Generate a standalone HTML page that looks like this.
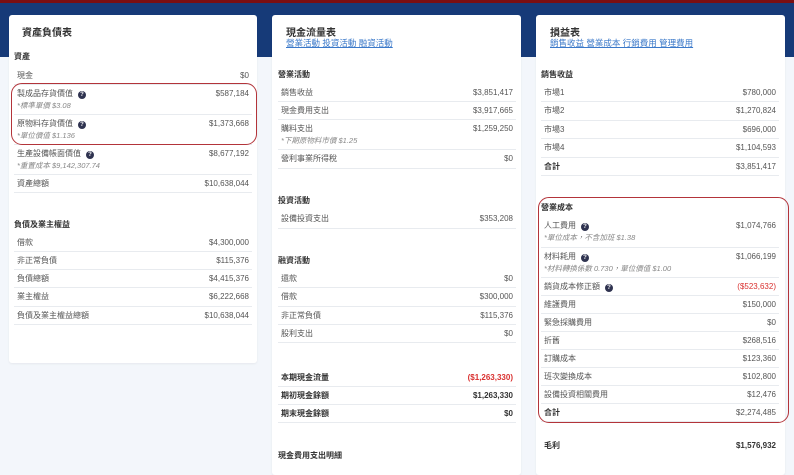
<!DOCTYPE html>
<html><head><meta charset="utf-8">
<style>
*{margin:0;padding:0;box-sizing:border-box}
body{width:794px;height:468px;overflow:hidden;background:#f3f6fb;font-family:"Liberation Sans","Noto Sans CJK TC",sans-serif;font-size:8px;color:#555;position:relative}
.top{position:absolute;left:0;top:0;width:794px;height:3px;background:#7a0e12}
.band{position:absolute;left:0;top:3px;width:794px;height:54px;background:#163a78}
.card{position:absolute;background:#fff;border-radius:3px;box-shadow:0 1px 2px rgba(0,0,0,.06)}
.t{position:absolute;font-size:10px;font-weight:bold;color:#333}
.lk{position:absolute;font-size:8.5px;color:#3a78c9;text-decoration:underline}
.h{position:absolute;font-weight:bold;color:#333;font-size:8px}
.r{position:absolute;border-bottom:1px solid #e8ebef;line-height:18px}
.r .l{position:absolute;left:3px;top:0}
.r .v{position:absolute;right:3px;top:0}
.r .s{position:absolute;left:3px;top:12px;font-style:italic;color:#888;font-size:7.5px}
.b{font-weight:bold;color:#333}
.red{color:#d9302f}
.q{display:inline-block;width:8px;height:8px;border-radius:50%;background:#2f3350;color:#fff;font-size:6px;line-height:8px;text-align:center;font-weight:bold;margin-left:5px;vertical-align:0}
.box{position:absolute;border:1.3px solid #b3343a;border-radius:11px}
</style></head><body>
<div class="top"></div><div class="band"></div>

<div class="card" style="left:9px;top:15px;width:248px;height:348px">
<div class="t" style="left:13px;top:9px">資產負債表</div>
<div class="h" style="left:5px;top:36px">資產</div>
<div class="r" style="left:5px;width:238px;top:52px;height:18px"><span class="l">現金</span><span class="v">$0</span></div>
<div class="r" style="left:5px;width:238px;top:70px;height:30px"><span class="l">製成品存貨價值<span class="q">?</span></span><span class="s">*標準單價 $3.08</span><span class="v">$587,184</span></div>
<div class="r" style="left:5px;width:238px;top:100px;height:30px"><span class="l">原物料存貨價值<span class="q">?</span></span><span class="s">*單位價值 $1.136</span><span class="v">$1,373,668</span></div>
<div class="r" style="left:5px;width:238px;top:130px;height:30px"><span class="l">生產設備帳面價值<span class="q">?</span></span><span class="s">*重置成本 $9,142,307.74</span><span class="v">$8,677,192</span></div>
<div class="r" style="left:5px;width:238px;top:160px;height:18px"><span class="l">資產總額</span><span class="v">$10,638,044</span></div>
<div class="h" style="left:5px;top:204px">負債及業主權益</div>
<div class="r" style="left:5px;width:238px;top:219px;height:18px"><span class="l">借款</span><span class="v">$4,300,000</span></div>
<div class="r" style="left:5px;width:238px;top:237px;height:18px"><span class="l">非正常負債</span><span class="v">$115,376</span></div>
<div class="r" style="left:5px;width:238px;top:255px;height:18px"><span class="l">負債總額</span><span class="v">$4,415,376</span></div>
<div class="r" style="left:5px;width:238px;top:273px;height:19px"><span class="l">業主權益</span><span class="v">$6,222,668</span></div>
<div class="r" style="left:5px;width:238px;top:292px;height:18px"><span class="l">負債及業主權益總額</span><span class="v">$10,638,044</span></div>
</div>
<div class="box" style="left:11px;top:83px;width:246px;height:62px"></div>

<div class="card" style="left:272px;top:15px;width:249px;height:460px">
<div class="t" style="left:14px;top:9px">現金流量表</div>
<div class="lk" style="left:14px;top:22px">營業活動 投資活動 融資活動</div>
<div class="h" style="left:6px;top:54px">營業活動</div>
<div class="r" style="left:6px;width:238px;top:69px;height:18px"><span class="l">銷售收益</span><span class="v">$3,851,417</span></div>
<div class="r" style="left:6px;width:238px;top:87px;height:18px"><span class="l">現金費用支出</span><span class="v">$3,917,665</span></div>
<div class="r" style="left:6px;width:238px;top:105px;height:30px"><span class="l">購料支出</span><span class="s">*下期原物料市價 $1.25</span><span class="v">$1,259,250</span></div>
<div class="r" style="left:6px;width:238px;top:135px;height:19px"><span class="l">營利事業所得稅</span><span class="v">$0</span></div>
<div class="h" style="left:6px;top:180px">投資活動</div>
<div class="r" style="left:6px;width:238px;top:195px;height:19px"><span class="l">設備投資支出</span><span class="v">$353,208</span></div>
<div class="h" style="left:6px;top:240px">融資活動</div>
<div class="r" style="left:6px;width:238px;top:255px;height:18px"><span class="l">還款</span><span class="v">$0</span></div>
<div class="r" style="left:6px;width:238px;top:273px;height:19px"><span class="l">借款</span><span class="v">$300,000</span></div>
<div class="r" style="left:6px;width:238px;top:292px;height:18px"><span class="l">非正常負債</span><span class="v">$115,376</span></div>
<div class="r" style="left:6px;width:238px;top:310px;height:18px"><span class="l">股利支出</span><span class="v">$0</span></div>
<div class="r b" style="left:6px;width:238px;top:354px;height:18px"><span class="l">本期現金流量</span><span class="v red">($1,263,330)</span></div>
<div class="r b" style="left:6px;width:238px;top:372px;height:18px"><span class="l">期初現金餘額</span><span class="v">$1,263,330</span></div>
<div class="r b" style="left:6px;width:238px;top:390px;height:18px"><span class="l">期末現金餘額</span><span class="v">$0</span></div>
<div class="h" style="left:6px;top:435px">現金費用支出明細</div>
</div>

<div class="card" style="left:536px;top:15px;width:249px;height:460px">
<div class="t" style="left:14px;top:9px">損益表</div>
<div class="lk" style="left:14px;top:22px">銷售收益 營業成本 行銷費用 管理費用</div>
<div class="h" style="left:5px;top:54px">銷售收益</div>
<div class="r" style="left:5px;width:238px;top:69px;height:18px"><span class="l">市場1</span><span class="v">$780,000</span></div>
<div class="r" style="left:5px;width:238px;top:87px;height:19px"><span class="l">市場2</span><span class="v">$1,270,824</span></div>
<div class="r" style="left:5px;width:238px;top:106px;height:18px"><span class="l">市場3</span><span class="v">$696,000</span></div>
<div class="r" style="left:5px;width:238px;top:124px;height:19px"><span class="l">市場4</span><span class="v">$1,104,593</span></div>
<div class="r" style="left:5px;width:238px;top:143px;height:18px"><span class="l b">合計</span><span class="v">$3,851,417</span></div>
<div class="h" style="left:5px;top:187px">營業成本</div>
<div class="r" style="left:5px;width:238px;top:202px;height:31px"><span class="l">人工費用<span class="q">?</span></span><span class="s">*單位成本，不含加班 $1.38</span><span class="v">$1,074,766</span></div>
<div class="r" style="left:5px;width:238px;top:233px;height:30px"><span class="l">材料耗用<span class="q">?</span></span><span class="s">*材料轉換係數 0.730，單位價值 $1.00</span><span class="v">$1,066,199</span></div>
<div class="r" style="left:5px;width:238px;top:263px;height:18px"><span class="l">銷貨成本修正額<span class="q">?</span></span><span class="v red">($523,632)</span></div>
<div class="r" style="left:5px;width:238px;top:281px;height:18px"><span class="l">維護費用</span><span class="v">$150,000</span></div>
<div class="r" style="left:5px;width:238px;top:299px;height:18px"><span class="l">緊急採購費用</span><span class="v">$0</span></div>
<div class="r" style="left:5px;width:238px;top:317px;height:18px"><span class="l">折舊</span><span class="v">$268,516</span></div>
<div class="r" style="left:5px;width:238px;top:335px;height:18px"><span class="l">訂購成本</span><span class="v">$123,360</span></div>
<div class="r" style="left:5px;width:238px;top:353px;height:18px"><span class="l">班次變換成本</span><span class="v">$102,800</span></div>
<div class="r" style="left:5px;width:238px;top:371px;height:18px"><span class="l">設備投資相關費用</span><span class="v">$12,476</span></div>
<div class="r" style="left:5px;width:238px;top:389px;height:18px"><span class="l b">合計</span><span class="v">$2,274,485</span></div>
<div class="r b" style="left:5px;width:238px;top:422px;height:18px;border:none"><span class="l">毛利</span><span class="v">$1,576,932</span></div>
</div>
<div class="box" style="left:538px;top:197px;width:251px;height:226px"></div>
</body></html>
